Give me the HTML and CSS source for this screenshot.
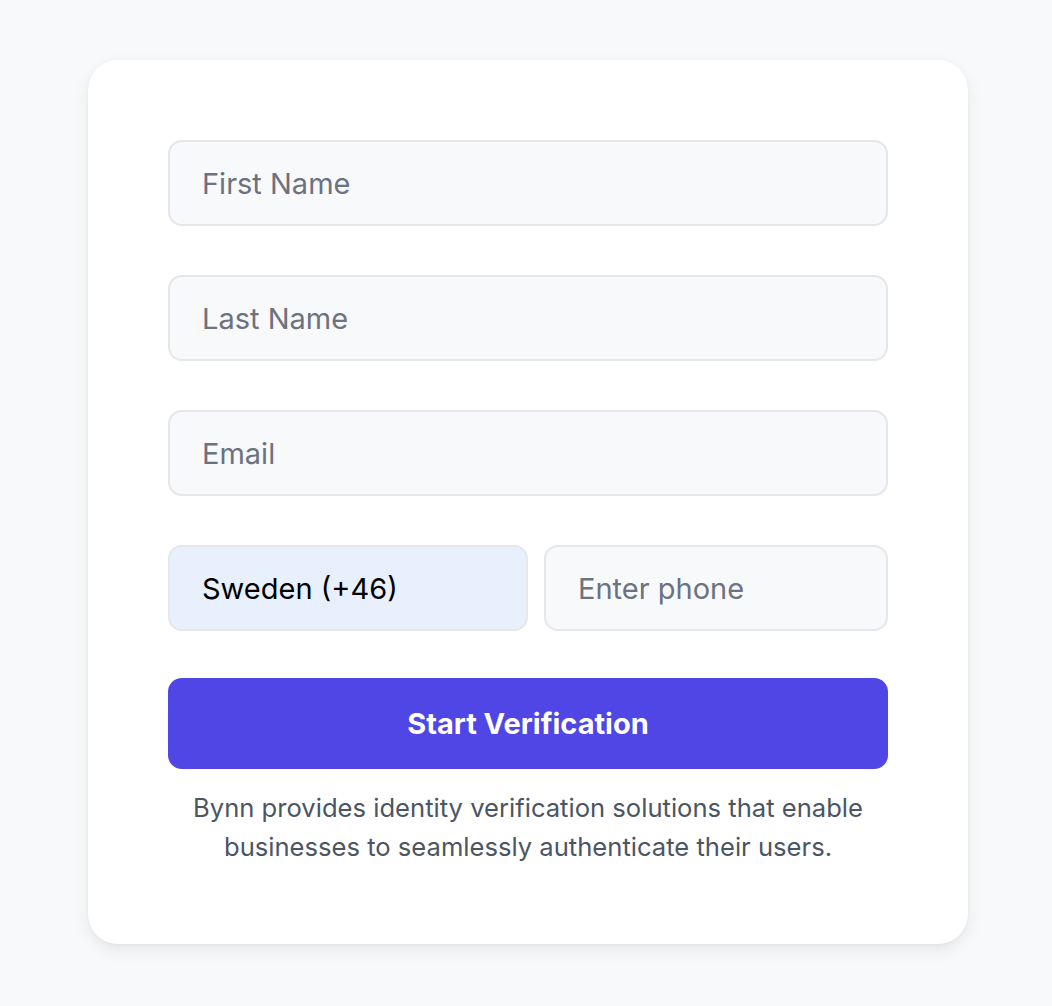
FILE: index.html
```html
<!DOCTYPE html>
<html lang="en">
<head>
<meta charset="utf-8">
<title>Bynn Verification</title>
<link rel="stylesheet" href="styles.css">
</head>
<body>
<main class="page">
  <form class="card">
    <input class="field" type="text" placeholder="First Name">
    <input class="field" type="text" placeholder="Last Name">
    <input class="field" type="email" placeholder="Email">
    <div class="phone-row">
      <div class="field country">Sweden (+46)</div>
      <input class="field phone" type="tel" placeholder="Enter phone">
    </div>
    <button class="submit" type="button">Start Verification</button>
    <p class="note">Bynn provides identity verification solutions that enable businesses to seamlessly authenticate their users.</p>
  </form>
</main>
</body>
</html>
```
FILE: styles.css
```css
* { box-sizing: border-box; }
html, body { margin: 0; padding: 0; }
body {
  background: #f8f9fb;
  font-family: Inter, "Noto Sans", sans-serif;
}
.page {
  padding: 60px 84px 62px 88px;
}
.card {
  width: 880px;
  background: #ffffff;
  border-radius: 30px;
  padding: 80px 80px 78px 80px;
  box-shadow: 0 6px 16px rgba(0, 0, 0, 0.08), 0 1px 3px rgba(0,0,0,0.04);
  display: flex;
  flex-direction: column;
}
.field {
  display: flex;
  align-items: center;
  width: 100%;
  height: 86px;
  margin: 0 0 49px 0;
  padding: 0 32px;
  border: 2px solid #e5e7eb;
  border-radius: 14px;
  background: #f8f9fb;
  font-family: Inter, "Noto Sans", sans-serif;
  font-size: 29px;
  color: #111827;
  outline: none;
}
.field::placeholder { color: #6b7280; opacity: 1; }
.phone-row {
  display: flex;
  gap: 16px;
  margin-bottom: 47px;
}
.phone-row .field { margin: 0; }
.country {
  flex: 0 0 360px;
  background: #e8f0fe;
  color: #000000;
}
.phone { flex: 1 1 0; width: auto; min-width: 0; }
.submit {
  height: 91px;
  border: none;
  border-radius: 14px;
  background: #4f46e5;
  color: #ffffff;
  font-family: Inter, "Noto Sans", sans-serif;
  font-size: 29px;
  font-weight: 700;
  cursor: pointer;
}
.note {
  margin: 19px 0 0 0;
  text-align: center;
  color: #4b5563;
  font-size: 25.6px;
  line-height: 39px;
}
```
